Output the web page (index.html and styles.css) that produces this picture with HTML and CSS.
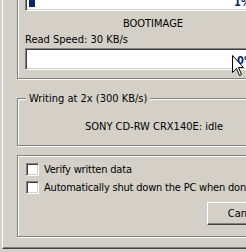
FILE: index.html
```html
<!DOCTYPE html>
<html lang="en">
<head>
    <meta charset="UTF-8">
    <title>Burn Progress</title>
    <link rel="stylesheet" href="styles.css">
</head>
<body>
    <div class="page">
        <div class="group group-top">
            <div class="sunken bar">
                <span class="block"></span>
                <span class="pct pct-top">1%</span>
            </div>
            <div class="caption">BOOTIMAGE</div>
            <div class="speed">Read Speed: 30 KB/s</div>
            <div class="sunken bar bar-buffer">
                <span class="pct pct-buffer">0%</span>
            </div>
        </div>

        <div class="group group-writer">
            <div class="group-title">Writing at 2x (300 KB/s)</div>
            <div class="caption writer">SONY CD-RW CRX140E: idle</div>
        </div>

        <div class="group group-options">
            <div class="check-row">
                <span class="check"></span>
                <span>Verify written data</span>
            </div>
            <div class="check-row second">
                <span class="check"></span>
                <span>Automatically shut down the PC when done</span>
            </div>
            <button class="btn">Cancel</button>
        </div>
    </div>

    <svg class="cursor" width="13" height="22" viewBox="0 0 13 22">
        <path d="M0.5 0.5 V17.5 L4.5 13.5 L7.5 20.5 L9.5 19.5 L6.5 12.5 H11.5 Z" fill="#fff" stroke="#000" stroke-width="1"/>
    </svg>
</body>
</html>
```

FILE: styles.css
```css
body {
    margin: 0;
    background: #d4d0c8;
    font-family: "DejaVu Sans Condensed", "DejaVu Sans", sans-serif;
    font-stretch: condensed;
    font-size: 11px;
    line-height: 13px;
    color: #000;
    overflow: hidden;
    height: 252px;
}
.page {
    margin-left: 2px;
    border-left: 1px solid #fff;
    border-bottom: 1px solid #404040;
    box-shadow: inset 0 -1px #808080;
    padding-bottom: 11px;
}
.group {
    width: 256px;
    margin-left: 14px;
    border: 1px solid #808080;
    box-shadow: inset 1px 1px #fff, 1px 1px #fff;
    padding: 0 7px 0 8px;
}
.group-top {
    margin-top: -20px;
    padding-top: 8px;
    padding-bottom: 8px;
    padding-left: 7px;
}
.sunken {
    background: #fff;
    border: 1px solid;
    border-color: #808080 #fff #fff #808080;
    box-shadow: inset 1px 1px #404040, inset -1px -1px #d4d0c8;
}
.bar {
    height: 22px;
    box-sizing: border-box;
    display: flex;
    align-items: flex-end;
    padding: 2px;
}
.block {
    width: 6px;
    height: 16px;
    margin: 0 0 1px 1px;
    background: #0a246a;
}
.pct {
    color: #0a246a;
    font-weight: bold;
}
.pct-top {
    margin-left: 199px;
    line-height: 10px;
}
.bar-buffer {
    margin-top: 2px;
    align-items: center;
}
.pct-buffer {
    margin-left: 209px;
    margin-top: 2px;
}
.caption {
    text-align: center;
    margin-top: 6px;
}
.speed {
    margin-top: 3px;
}
.group-writer {
    margin-top: 19px;
    padding-bottom: 12px;
}
.group-title {
    width: fit-content;
    margin: -7px 0 0 0;
    padding: 0 3px;
    background: #d4d0c8;
}
.writer {
    margin-top: 15px;
}
.group-options {
    margin-top: 9px;
    padding-top: 7px;
    padding-bottom: 11px;
}
.check-row {
    display: flex;
    align-items: center;
    gap: 5px;
    white-space: nowrap;
    letter-spacing: -0.2px;
}
.check-row.second {
    margin-top: 5px;
}
.check {
    width: 13px;
    height: 13px;
    flex: none;
    box-sizing: border-box;
    background: #fff;
    border: 1px solid;
    border-color: #808080 #fff #fff #808080;
    box-shadow: inset 1px 1px #404040, inset -1px -1px #d4d0c8;
}
.btn {
    display: block;
    width: 75px;
    height: 23px;
    margin: 8px 0 0 181px;
    padding: 0;
    font: inherit;
    font-stretch: condensed;
    color: #000;
    background: #d4d0c8;
    border: 1px solid;
    border-color: #fff #404040 #404040 #fff;
    box-shadow: inset -1px -1px #808080;
}
.cursor {
    position: absolute;
    left: 232px;
    top: 55px;
}
```
